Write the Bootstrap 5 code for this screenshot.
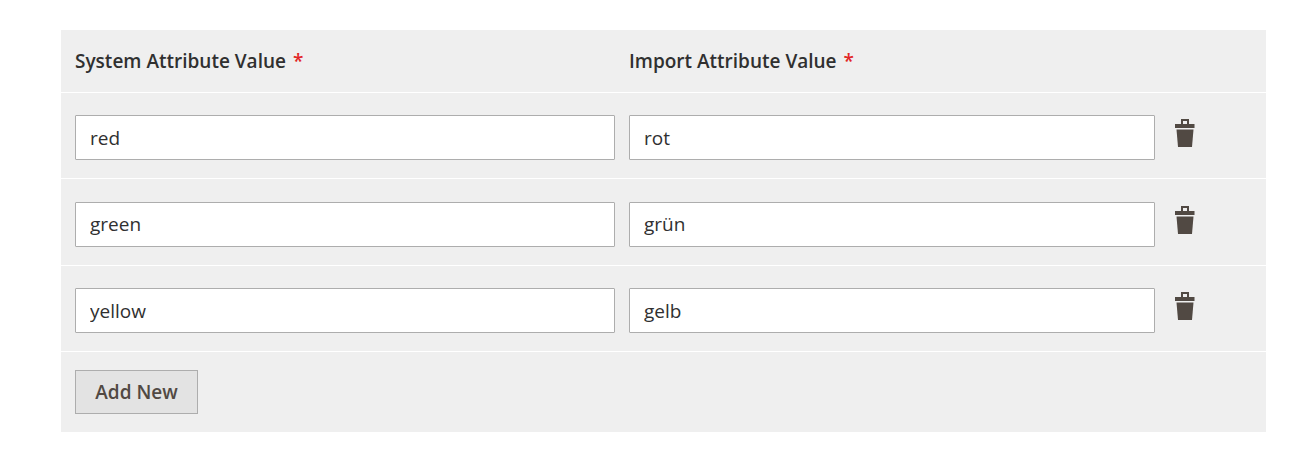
<!DOCTYPE html>
<html lang="en">
<head>
    <meta charset="UTF-8">
    <title>Attribute Values</title>
    <link href="https://cdn.jsdelivr.net/npm/bootstrap@5.3.3/dist/css/bootstrap.min.css" rel="stylesheet">
    <style>
        body { background: #fff; font-family: "Open Sans", sans-serif; color: #303030; }
        .map-table { margin: 30px 44px 0 61px; background: #efefef; }
        .map-row { display: flex; border-bottom: 1px solid #fff; padding: 0 14px; }
        .map-row:last-child { border-bottom: 0; }
        .head-row { height: 63px; align-items: center; font-size: 19px; font-weight: 600; }
        .value-row { height: 86.33px; align-items: flex-start; padding-top: 22.45px; }
        .col-system { width: 540px; margin-right: 14px; flex: none; }
        .col-import { width: 526px; flex: none; }
        .req-mark { color: #e22626; margin-left: 2px; }
        .map-input { height: 45px; border: 1px solid #adadad; border-radius: 1px; padding: 0 14px; font-size: 19px; color: #303030; }
        .trash-btn { background: none; border: 0; padding: 0; margin: 3px 0 0 19px; width: 22px; height: 30px; line-height: 0; }
        .foot-row { height: 80px; padding-top: 18px; }
        .add-btn { height: 44px; width: 123px; background: #e3e3e3; border: 1px solid #adadad; border-radius: 0; color: #514943; font-size: 19px; font-weight: 600; padding: 0; }
    </style>
</head>
<body>
<svg width="0" height="0" class="d-block">
    <symbol id="trash" viewBox="0 0 22 30">
        <path fill="#514943" fill-rule="evenodd" d="M7 1 H15 V6 H20.5 V10 H1 V6 H7 Z M9 3 V6 H13 V3 Z"/>
        <path fill="#514943" d="M2.5 11.5 H19.5 L18 29 H4 Z"/>
    </symbol>
</svg>
<div class="map-table">
    <div class="map-row head-row">
        <div class="col-system">System Attribute Value <span class="req-mark">*</span></div>
        <div class="col-import">Import Attribute Value <span class="req-mark">*</span></div>
    </div>
    <div class="map-row value-row">
        <div class="col-system"><input type="text" class="form-control map-input" value="red"></div>
        <div class="col-import"><input type="text" class="form-control map-input" value="rot"></div>
        <button type="button" class="trash-btn"><svg width="22" height="30"><use href="#trash"/></svg></button>
    </div>
    <div class="map-row value-row">
        <div class="col-system"><input type="text" class="form-control map-input" value="green"></div>
        <div class="col-import"><input type="text" class="form-control map-input" value="grün"></div>
        <button type="button" class="trash-btn"><svg width="22" height="30"><use href="#trash"/></svg></button>
    </div>
    <div class="map-row value-row">
        <div class="col-system"><input type="text" class="form-control map-input" value="yellow"></div>
        <div class="col-import"><input type="text" class="form-control map-input" value="gelb"></div>
        <button type="button" class="trash-btn"><svg width="22" height="30"><use href="#trash"/></svg></button>
    </div>
    <div class="map-row foot-row">
        <button type="button" class="btn add-btn">Add New</button>
    </div>
</div>
<script src="https://cdn.jsdelivr.net/npm/bootstrap@5.3.3/dist/js/bootstrap.bundle.min.js"></script>
</body>
</html>
